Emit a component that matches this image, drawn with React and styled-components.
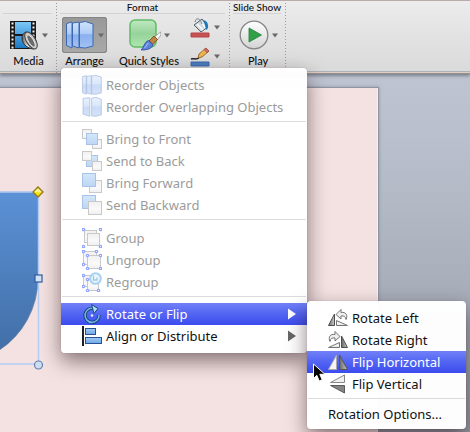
import React from "react";
import styled, { createGlobalStyle, css } from "styled-components";

const GlobalStyle = createGlobalStyle`
  * { box-sizing: border-box; }
  body { margin: 0; overflow: hidden; }
  button { font: inherit; color: inherit; border: 0; padding: 0; background: none; }
`;

const Page = styled.div`
  position: relative;
  display: flex;
  flex-direction: column;
  min-height: 100vh;
  overflow: hidden;
  font-family: "Noto Sans", "Open Sans", sans-serif;
  color: #111;
`;

/* ---------- ribbon ---------- */

const Ribbon = styled.header`
  display: flex;
  height: 74px;
  border-top: 1px solid #b9aba7;
  border-bottom: 1px solid #8f9097;
  background: linear-gradient(#ececec, #e2e2e2 50%, #dadada);
  box-shadow: inset 0 -1px #e3cdbd, inset 0 -2px #adb3b8, 0 2px 3px rgba(70, 75, 90, 0.55);
  z-index: 1;
`;

const Section = styled.section`
  display: flex;
  flex-direction: column;
  flex: 0 0 ${(p) => p.$width}px;
  padding-bottom: 4px;
  font-family: Lato, "Noto Sans", sans-serif;
  background: linear-gradient(to bottom, #9a9a9a 1px, transparent 1px) right 5px / 1px 3px repeat-y;
`;

const SectionTitle = styled.h2`
  margin: 0 5px 0 3px;
  height: 13px;
  border-bottom: 1px solid #d2d2d2;
  text-align: center;
  font-size: 10px;
  font-weight: 500;
  line-height: 13px;
  white-space: nowrap;
`;

const SectionBody = styled.div`
  display: flex;
  flex: 1;
  padding: 3px 5px 0;
  justify-content: ${(p) => (p.$center ? "center" : "flex-start")};
`;

const Tool = styled.button`
  display: flex;
  flex-direction: column;
  align-items: center;
  flex: 0 0 ${(p) => p.$width}px;
  margin-right: ${(p) => p.$gap || 0}px;
  font-size: 11px;
  font-weight: 500;
  line-height: 16px;
  white-space: nowrap;
`;

const ToolFace = styled.span`
  display: flex;
  align-items: center;
  justify-content: center;
  gap: 3px;
  width: 45px;
  height: 36px;
  border-radius: 3px;
  ${(p) =>
    p.$pressed &&
    css`
      gap: 4px;
      background: linear-gradient(#989898, #a9a9a9);
      box-shadow: inset 0 0 0 1px #858585;
    `}
`;

const ColorTools = styled.div`
  display: flex;
  flex-direction: column;
  gap: 8px;
`;

const ColorButton = styled.button`
  display: flex;
  align-items: center;
  gap: 4px;
  height: 21px;
`;

const Caret = () => (
  <svg width="6" height="5" viewBox="0 0 6 5" aria-hidden="true">
    <path d="M0 .5h6L3 4.5z" fill="#686868" />
  </svg>
);

const MediaIcon = () => (
  <svg width="29" height="31" viewBox="0 0 29 31" aria-hidden="true">
    <defs>
      <linearGradient id="film" x2="0" y2="1">
        <stop offset="0" stopColor="#7cc8f6" />
        <stop offset="1" stopColor="#1c78c4" />
      </linearGradient>
      <linearGradient id="cone">
        <stop offset="0" stopColor="#555" />
        <stop offset=".5" stopColor="#f2f2f2" />
        <stop offset="1" stopColor="#666" />
      </linearGradient>
    </defs>
    <path d="M0 1h26v28H0z" fill="#18191b" />
    <path d="M5 2h16v12H5zM5 16h16v12H5z" fill="url(#film)" />
    <path d="M2.500 2.500V29M23.500 2.500V29" stroke="#f4f4f4" strokeWidth="2" strokeDasharray="2 2" />
    <path d="M12 18c0-3 2-6 5-6l7 17c-5 0-12-4-12-11z" fill="url(#cone)" stroke="#333" />
    <ellipse cx="21" cy="20.500" rx="4.500" ry="9.500" transform="rotate(-32 21 20.500)" fill="#c4c4c4" stroke="#3d3d3d" />
    <ellipse cx="21" cy="21" rx="2.500" ry="7" transform="rotate(-32 21 21)" fill="#6b6b6b" stroke="#eee" strokeWidth=".8" />
  </svg>
);

const PanelsIcon = ({ width = 20, height = 20, two }) => (
  <svg width={width} height={height} viewBox="0 0 28 28" preserveAspectRatio="none" aria-hidden="true">
    <defs>
      <linearGradient id="panel" x2="0" y2="1">
        <stop offset="0" stopColor="#cfe2fc" />
        <stop offset=".45" stopColor="#b0ccf7" />
        <stop offset=".5" stopColor="#8ab0ee" />
        <stop offset="1" stopColor="#a3c2f3" />
      </linearGradient>
    </defs>
    <g fill="url(#panel)" stroke="#3c68b2">
      {!two && <path d="M.5 2.500L6 1v26L.5 24.500z" />}
      <path d={two ? "M1.500 2L11 1v26l-9.500-3z" : "M6.500 2L13 1v26l-6.500-2z"} />
      <path d="M13.500 1.500l6-1L27 3v22l-7.500 2-6-.5z" />
    </g>
  </svg>
);

const StylesIcon = () => (
  <svg width="32" height="32" viewBox="0 0 32 32" aria-hidden="true">
    <defs>
      <linearGradient id="green" x2="0" y2="1">
        <stop offset="0" stopColor="#c0e8c2" />
        <stop offset=".5" stopColor="#96d39a" />
        <stop offset="1" stopColor="#aee5ae" />
      </linearGradient>
    </defs>
    <rect x="1" y="1" width="26" height="27" rx="5" fill="url(#green)" stroke="#60bc65" strokeWidth="1.500" />
    <path d="M31.500 13l-6 5 2.500 3 4-5z" fill="#f8f8f8" stroke="#888" strokeWidth=".7" />
    <path d="M25 17l3.500 3.500-4.500 5-4-3.500z" fill="#c28342" stroke="#70431c" strokeWidth=".8" />
    <path d="M19.500 21.500l4.500 4.200c-1 4-6 5.500-12 5.300 3-2.500 3-8 7.500-9.500z" fill="#5c82dc" stroke="#2b479c" strokeWidth=".8" />
    <path d="M19.500 24c-1.500 1-2 3.500-4 5" stroke="#b5caf8" fill="none" />
  </svg>
);

const BucketIcon = () => (
  <svg width="20" height="20" viewBox="0 0 20 20" aria-hidden="true">
    <path d="M4 7l8-6 6 8-7 5z" fill="#d2d9de" stroke="#535d66" />
    <path d="M7 6l6 6M11 3l4 7" stroke="#fff" strokeWidth="1.300" />
    <path d="M5 4c1-5 5-4 7 2" fill="none" stroke="#70787e" />
    <path d="M13 2c5 1 6 5 4 10-2-1-1-5-4-10z" fill="#1978bd" />
    <path d="M1 15h18v4H1z" fill="#c75353" stroke="#b44545" />
  </svg>
);

const PencilIcon = () => (
  <svg width="20" height="20" viewBox="0 0 20 20" aria-hidden="true">
    <path d="M1 12c3-1 5 1 8-1" fill="none" stroke="#222" strokeWidth="1.500" />
    <path d="M8 11l1-4 7-6 3 3-7 6z" fill="#efb64e" stroke="#87551d" strokeWidth=".8" />
    <path d="M14 2.500L16 1l3 3-2 2z" fill="#d56c62" stroke="#944" strokeWidth=".6" />
    <path d="M1 15h18v4H1z" fill="#4b7dc0" stroke="#3a68aa" />
  </svg>
);

const PlayIcon = () => (
  <svg width="30" height="30" viewBox="0 0 30 30" aria-hidden="true">
    <defs>
      <linearGradient id="disc" x2="0" y2="1">
        <stop offset="0" stopColor="#fff" />
        <stop offset="1" stopColor="#d3d3d3" />
      </linearGradient>
    </defs>
    <circle cx="15" cy="15" r="13.800" fill="url(#disc)" stroke="#858585" strokeWidth="1.300" />
    <path d="M10 8l12.500 7L10 22z" fill="#31a047" stroke="#218238" strokeWidth=".8" />
  </svg>
);

/* ---------- slide area ---------- */

const Workspace = styled.main`
  flex: 1;
  display: flex;
  padding: 14px 92px 0 0;
  background: linear-gradient(#bfc4d1, #b3bac6 35%, #a3a9b5 70%, #9499a4);
`;

const Slide = styled.div`
  position: relative;
  flex: 1;
  overflow: visible;
  background: #f4e2e2;
  box-shadow: inset -1px 0 #fbefee, 0 0 0 1px #8e96a3, 0 0 3px 1px #8b93a1;
`;

const ShapeDrawing = styled.svg`
  position: absolute;
  left: 0;
  top: 98px;
`;

const SelectedShape = () => (
  <ShapeDrawing width="48" height="188" viewBox="0 186 48 188" role="img" aria-label="Selected shape">
    <defs>
      <linearGradient id="shape" x2="0" y2="1">
        <stop offset="0" stopColor="#5b91d6" />
        <stop offset="1" stopColor="#426fa7" />
      </linearGradient>
      <linearGradient id="gold" x2="0" y2="1">
        <stop offset="0" stopColor="#f7e51c" />
        <stop offset=".4" stopColor="#fff9a8" />
        <stop offset=".6" stopColor="#f4e400" />
        <stop offset="1" stopColor="#f2e640" />
      </linearGradient>
    </defs>
    <path d="M-2 192H38V278A86 86 0 0 1-2 351z" fill="url(#shape)" stroke="#6c7f9d" strokeOpacity=".6" />
    <path d="M0 192h38.500v172H0" fill="none" stroke="#b3cdf4" strokeWidth="1.500" />
    <path d="M38 187l5 5-5 5-5-5z" fill="url(#gold)" stroke="#96761a" strokeWidth="1.300" />
    <rect x="35" y="275" width="7" height="7" fill="#d5e1f4" stroke="#2f5c9e" strokeWidth="1.200" />
    <circle cx="38.500" cy="365" r="4" fill="#cfdcf2" stroke="#6181ae" strokeWidth="1.200" />
  </ShapeDrawing>
);

/* ---------- menus ---------- */

const MenuPanel = styled.div`
  position: absolute;
  left: ${(p) => p.$left}px;
  top: ${(p) => p.$top}px;
  width: ${(p) => p.$width}px;
  padding: 6px 0 ${(p) => p.$bottom}px;
  border-radius: 4px;
  background: rgba(255, 255, 255, 0.98);
  box-shadow: 0 8px 20px rgba(40, 20, 25, 0.55), 0 0 1px rgba(0, 0, 0, 0.35);
  z-index: 2;
`;

const MenuItem = styled.button`
  display: flex;
  align-items: center;
  gap: 4px;
  width: 100%;
  height: 22px;
  padding: 0 11px 0 21px;
  font-size: 13px;
  line-height: 22px;
  text-align: left;
  white-space: nowrap;
  color: #111;

  &:disabled {
    color: #9b9b9b;
  }
  &:disabled svg {
    opacity: 0.45;
  }
  ${(p) =>
    p.$active &&
    css`
      color: #fff;
      background: linear-gradient(#7180f8, #5265f3 50%, #3c4bee);
    `}
`;

const ItemLabel = styled.span`
  flex: 1;
`;

const Separator = styled.hr`
  height: 1px;
  margin: 3px 1px ${(p) => p.$after}px;
  border: 0;
  background: #dcdcdc;
`;

const SubmenuArrow = ({ active }) => (
  <svg width="8" height="12" viewBox="0 0 8 12" aria-hidden="true">
    <path d="M0 .5v11L8 6z" fill={active ? "#fff" : "#666"} />
  </svg>
);

const Icon = ({ children }) => (
  <svg width="20" height="20" viewBox="0 0 20 20" aria-hidden="true">
    <defs>
      <linearGradient id="paper" x2="0" y2="1">
        <stop offset="0" stopColor="#e0e0e0" />
        <stop offset=".6" stopColor="#f4f4f4" />
        <stop offset="1" stopColor="#dcdcdc" />
      </linearGradient>
      <linearGradient id="blue" x2="0" y2="1">
        <stop offset="0" stopColor="#a0cbf7" />
        <stop offset="1" stopColor="#6fa5e6" />
      </linearGradient>
      <linearGradient id="steel">
        <stop offset="0" stopColor="#666" />
        <stop offset="1" stopColor="#ccc" />
      </linearGradient>
    </defs>
    {children}
  </svg>
);

const Sheet = ({ x, y, s, blue }) => (
  <rect x={x} y={y} width={s} height={s} fill={blue ? "url(#blue)" : "url(#paper)"} stroke={blue ? "#3f7ccb" : "#888"} />
);

const Dots = ({ points }) =>
  points.map(([x, y]) => <circle key={`${x}-${y}`} cx={x} cy={y} r="1.200" fill="#fff" stroke="#1238ff" strokeWidth="1.200" />);

const FrontIcon = () => (
  <Icon>
    <Sheet x={0.5} y={0.5} s={9} />
    <Sheet x={10.5} y={10.5} s={9} />
    <Sheet x={4.5} y={4.5} s={11} blue />
  </Icon>
);
const BackIcon = () => (
  <Icon>
    <Sheet x={4.5} y={4.5} s={11} blue />
    <Sheet x={0.5} y={0.5} s={9} />
    <Sheet x={10.5} y={10.5} s={9} />
  </Icon>
);
const ForwardIcon = () => (
  <Icon>
    <Sheet x={7.5} y={7.5} s={12} />
    <Sheet x={0.5} y={0.5} s={13} blue />
  </Icon>
);
const BackwardIcon = () => (
  <Icon>
    <Sheet x={0.5} y={0.5} s={13} blue />
    <Sheet x={6.5} y={6.5} s={13} />
  </Icon>
);
const GroupIcon = () => (
  <Icon>
    <Sheet x={2.5} y={2.5} s={12} />
    <Sheet x={5.5} y={5.5} s={12} />
    <Dots points={[[1.5, 1.5], [18.5, 1.5], [1.5, 18.5], [18.5, 18.5]]} />
  </Icon>
);
const UngroupIcon = () => (
  <Icon>
    <Sheet x={1.5} y={1.5} s={13} />
    <Sheet x={5.5} y={5.5} s={13} />
    <Dots points={[[1.5, 1.5], [14.5, 1.5], [1.5, 14.5], [5.5, 5.5], [18.5, 5.5], [5.5, 18.5], [18.5, 18.5]]} />
  </Icon>
);
const RegroupIcon = () => (
  <Icon>
    <Sheet x={1.5} y={3.5} s={11} />
    <Sheet x={5.5} y={7.5} s={11} />
    <Dots points={[[1.5, 3.5], [1.5, 14.5], [5.5, 7.5], [5.5, 18.5], [16.5, 18.5]]} />
    <circle cx="13.500" cy="6.500" r="5.300" fill="#d7edfa" stroke="#3c9be0" strokeWidth="2" />
    <path d="M11.500 3.500v4.500h3.500V5.500" fill="none" stroke="#3082c2" strokeWidth="1.300" />
  </Icon>
);
const RotateIcon = () => (
  <Icon>
    <path d="M11.500 4.500a7 7 0 1 0 5.500 6.500" fill="none" stroke="#123d6d" strokeWidth="3.200" />
    <path d="M11.500 4.500a7 7 0 1 0 5.500 6.500" fill="none" stroke="#73b7e5" strokeWidth="1.600" />
    <path d="M9.500.5l6.500 4-4 5z" fill="#a9dcf5" stroke="#174b7c" />
    <circle cx="10" cy="11.500" r="1.300" fill="#d9f2ff" />
  </Icon>
);
const AlignIcon = () => (
  <Icon>
    <path d="M1 0v20" stroke="#1b1f29" strokeWidth="2" />
    <rect x="3.500" y="2.500" width="10" height="6" fill="url(#blue)" stroke="#245394" />
    <rect x="3.500" y="11.500" width="16" height="6" fill="url(#blue)" stroke="#245394" />
  </Icon>
);
const RotateLeftIcon = () => (
  <Icon>
    <path d="M.5 17.500L6.500 6v11.500z" fill="url(#steel)" stroke="#4e4e4e" />
    <path d="M8.500 17.500v-5l11 5z" fill="url(#paper)" stroke="#777" />
    <path d="M8 6.500l5-5v3c5-1 7 3 5 7-.5-3-2-4-5-3.500v3z" fill="#efefef" stroke="#666" strokeWidth=".9" />
  </Icon>
);
const RotateRightIcon = () => (
  <Icon>
    <path d="M19.500 17.500L13.500 6v11.500z" fill="url(#steel)" stroke="#4e4e4e" />
    <path d="M11.500 17.500v-5l-11 5z" fill="url(#paper)" stroke="#777" />
    <path d="M12 6.500l-5-5v3c-5-1-7 3-5 7 .5-3 2-4 5-3.500v3z" fill="#efefef" stroke="#666" strokeWidth=".9" />
  </Icon>
);
const FlipHorizontalIcon = () => (
  <Icon>
    <path d="M.5 17.500L8.500 3v14.500z" fill="#f5f5f5" stroke="#aaa" />
    <path d="M11.500 17.500V3l8 14.500z" fill="url(#steel)" stroke="#555" />
  </Icon>
);
const FlipVerticalIcon = () => (
  <Icon>
    <path d="M16.500 1v7.500h-14z" fill="#f0f0f0" stroke="#888" />
    <path d="M2.500 11.500h14V19z" fill="#858585" stroke="#5a5a5a" />
  </Icon>
);
const ReorderIcon = () => <PanelsIcon />;
const OverlapIcon = () => <PanelsIcon two />;

const Pointer = styled.svg`
  position: absolute;
  left: 312px;
  top: 363px;
  z-index: 4;
`;

const arrangeItems = [
  { label: "Reorder Objects", icon: ReorderIcon, disabled: true },
  { label: "Reorder Overlapping Objects", icon: OverlapIcon, disabled: true },
  { after: 6 },
  { label: "Bring to Front", icon: FrontIcon, disabled: true },
  { label: "Send to Back", icon: BackIcon, disabled: true },
  { label: "Bring Forward", icon: ForwardIcon, disabled: true },
  { label: "Send Backward", icon: BackwardIcon, disabled: true },
  { after: 7 },
  { label: "Group", icon: GroupIcon, disabled: true },
  { label: "Ungroup", icon: UngroupIcon, disabled: true },
  { label: "Regroup", icon: RegroupIcon, disabled: true },
  { after: 6 },
  { label: "Rotate or Flip", icon: RotateIcon, active: true, submenu: true },
  { label: "Align or Distribute", icon: AlignIcon, submenu: true },
];

const rotateItems = [
  { label: "Rotate Left", icon: RotateLeftIcon },
  { label: "Rotate Right", icon: RotateRightIcon },
  { label: "Flip Horizontal", icon: FlipHorizontalIcon, active: true },
  { label: "Flip Vertical", icon: FlipVerticalIcon },
  { after: 4 },
  { label: "Rotation Options..." },
];

const Menu = ({ items, name, ...place }) => (
  <MenuPanel role="menu" aria-label={name} {...place}>
    {items.map(({ label, icon: Glyph, disabled, active, submenu, after }, i) =>
      label ? (
        <MenuItem key={label} role="menuitem" disabled={disabled} $active={active} aria-haspopup={submenu ? "menu" : undefined}>
          {Glyph && <Glyph />}
          <ItemLabel>{label}</ItemLabel>
          {submenu && <SubmenuArrow active={active} />}
        </MenuItem>
      ) : (
        <Separator key={i} $after={after} />
      )
    )}
  </MenuPanel>
);

export default function App() {
  return (
    <Page>
      <GlobalStyle />
      <Ribbon>
        <Section $width={57}>
          <SectionTitle aria-label="Insert" />
          <SectionBody $center>
            <Tool $width={45}>
              <ToolFace><MediaIcon /><Caret /></ToolFace>
              Media
            </Tool>
          </SectionBody>
        </Section>
        <Section $width={173}>
          <SectionTitle>Format</SectionTitle>
          <SectionBody>
            <Tool $width={45} $gap={12} aria-expanded="true">
              <ToolFace $pressed><PanelsIcon width={28} height={28} /><Caret /></ToolFace>
              Arrange
            </Tool>
            <Tool $width={60} $gap={11}>
              <ToolFace><StylesIcon /><Caret /></ToolFace>
              Quick Styles
            </Tool>
            <ColorTools>
              <ColorButton aria-label="Fill"><BucketIcon /><Caret /></ColorButton>
              <ColorButton aria-label="Line"><PencilIcon /><Caret /></ColorButton>
            </ColorTools>
          </SectionBody>
        </Section>
        <Section $width={55}>
          <SectionTitle>Slide Show</SectionTitle>
          <SectionBody $center>
            <Tool $width={45}>
              <ToolFace><PlayIcon /><Caret /></ToolFace>
              Play
            </Tool>
          </SectionBody>
        </Section>
      </Ribbon>
      <Workspace>
        <Slide>
          <SelectedShape />
        </Slide>
      </Workspace>
      <Menu name="Arrange" items={arrangeItems} $left={61} $top={68} $width={246} $bottom={6} />
      <Menu name="Rotate or Flip" items={rotateItems} $left={307} $top={301} $width={159} $bottom={4} />
      <Pointer width="15" height="20" viewBox="0 0 15 20" aria-hidden="true">
        <path d="M1.500 1v14.500l3.300-3.200 2.400 5.700 3-1.300-2.400-5.400H13z" fill="#050505" stroke="#fff" />
      </Pointer>
    </Page>
  );
}
